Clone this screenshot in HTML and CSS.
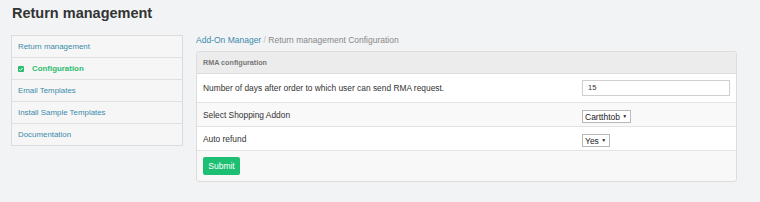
FILE: index.html
```html
<!DOCTYPE html>
<html>
<head>
<meta charset="utf-8">
<link rel="stylesheet" href="styles.css">
</head>
<body>
<h1 class="title">Return management</h1>
<div class="layout">
  <ul class="sidenav">
    <li class="nav-item"><a href="#">Return management</a></li>
    <li class="nav-item active"><a href="#"><svg class="check" width="6" height="6" viewBox="0 0 6 6"><rect width="6" height="6" rx="1" fill="#2bbd6e"/><path d="M1.3 3.1 L2.5 4.3 L4.8 1.8" stroke="#fff" stroke-width="1" fill="none"/></svg>Configuration</a></li>
    <li class="nav-item"><a href="#">Email Templates</a></li>
    <li class="nav-item"><a href="#">Install Sample Templates</a></li>
    <li class="nav-item"><a href="#">Documentation</a></li>
  </ul>
  <div class="main">
    <div class="breadcrumb"><a href="#">Add-On Manager</a><span class="sep"> / </span><span class="current">Return management Configuration</span></div>
    <div class="panel">
      <div class="panel-head">RMA configuration</div>
      <div class="row">
        <div class="label">Number of days after order to which user can send RMA request.</div>
        <div class="field"><div class="input">15</div></div>
      </div>
      <div class="row alt">
        <div class="label">Select Shopping Addon</div>
        <div class="field"><div class="select">Cartthtob <span class="arrow">▼</span></div></div>
      </div>
      <div class="row short">
        <div class="label">Auto refund</div>
        <div class="field"><div class="select">Yes <span class="arrow">▼</span></div></div>
      </div>
      <div class="panel-foot"><button class="btn">Submit</button></div>
    </div>
  </div>
</div>
</body>
</html>
```
FILE: styles.css
```css
html, body { margin: 0; padding: 0; }
body {
  background: #f2f3f5;
  font-family: "Liberation Sans", Arial, sans-serif;
  color: #333;
  width: 760px;
  height: 202px;
  overflow: hidden;
}
.title {
  margin: 0;
  padding: 4px 0 0 12px;
  font-size: 14.5px;
  font-weight: bold;
  color: #333;
  line-height: 18px;
  height: 31px;
  box-sizing: border-box;
}
.layout {
  display: flex;
  align-items: flex-start;
  padding: 4px 0 0 11px;
  gap: 13px;
}
.sidenav {
  list-style: none;
  margin: 0;
  padding: 0;
  width: 172px;
  border: 1px solid #dcdcdc;
  background: #f6f6f6;
  box-sizing: border-box;
}
.nav-item {
  height: 22px;
  border-top: 1px solid #e0e0e0;
  box-sizing: border-box;
  display: flex;
  align-items: center;
  padding-left: 6px;
  font-size: 7.9px;
}
.nav-item:first-child { border-top: none; height: 21px; }
.nav-item a { color: #3a8bab; text-decoration: none; display: flex; align-items: center; }
.nav-item.active a { color: #2bbd6e; font-weight: bold; }
.check { margin-right: 8px; }
.main { width: 541px; }
.breadcrumb {
  font-size: 8.5px;
  height: 16px;
  line-height: 10px;
  padding-top: 0;
}
.breadcrumb a { color: #3a8bab; text-decoration: none; }
.breadcrumb .sep { color: #bbb; }
.breadcrumb .current { color: #888; }
.panel {
  border: 1px solid #dcdcdc;
  border-radius: 3px;
  background: #f8f8f8;
  overflow: hidden;
}
.panel-head {
  height: 21px;
  background: #ececec;
  border-bottom: 1px solid #dedede;
  font-size: 7.2px;
  font-weight: bold;
  color: #777;
  display: flex;
  align-items: center;
  padding-left: 6px;
}
.row {
  display: flex;
  align-items: center;
  height: 29px;
  background: #fff;
  border-bottom: 1px solid #e3e3e3;
  box-sizing: border-box;
  padding-left: 6px;
}
.row.alt { background: #f9f9f9; height: 24px; }
.row.short { height: 24px; }
.label { flex: 1; font-size: 8.4px; color: #333; }
.field { width: 154px; }
.input {
  width: 148px;
  height: 16px;
  border: 1px solid #cfcfcf;
  box-sizing: border-box;
  font-size: 7.5px;
  padding-left: 5px;
  line-height: 14px;
  background: #fff;
}
.select {
  display: inline-block;
  border: 1px solid #b8b8b8;
  background: #fff;
  font-size: 8.5px;
  line-height: 10px;
  padding: 0 3px 0 2px;
  color: #222;
}
.arrow { font-size: 5px; vertical-align: 2px; }
.panel-foot {
  height: 30px;
  display: flex;
  align-items: center;
  padding-left: 6px;
}
.btn {
  background: #1dbf73;
  color: #fff;
  border: none;
  border-radius: 2px;
  font-family: "Liberation Sans", Arial, sans-serif;
  font-size: 8.5px;
  width: 37px;
  height: 18px;
  padding: 0;
}
```
